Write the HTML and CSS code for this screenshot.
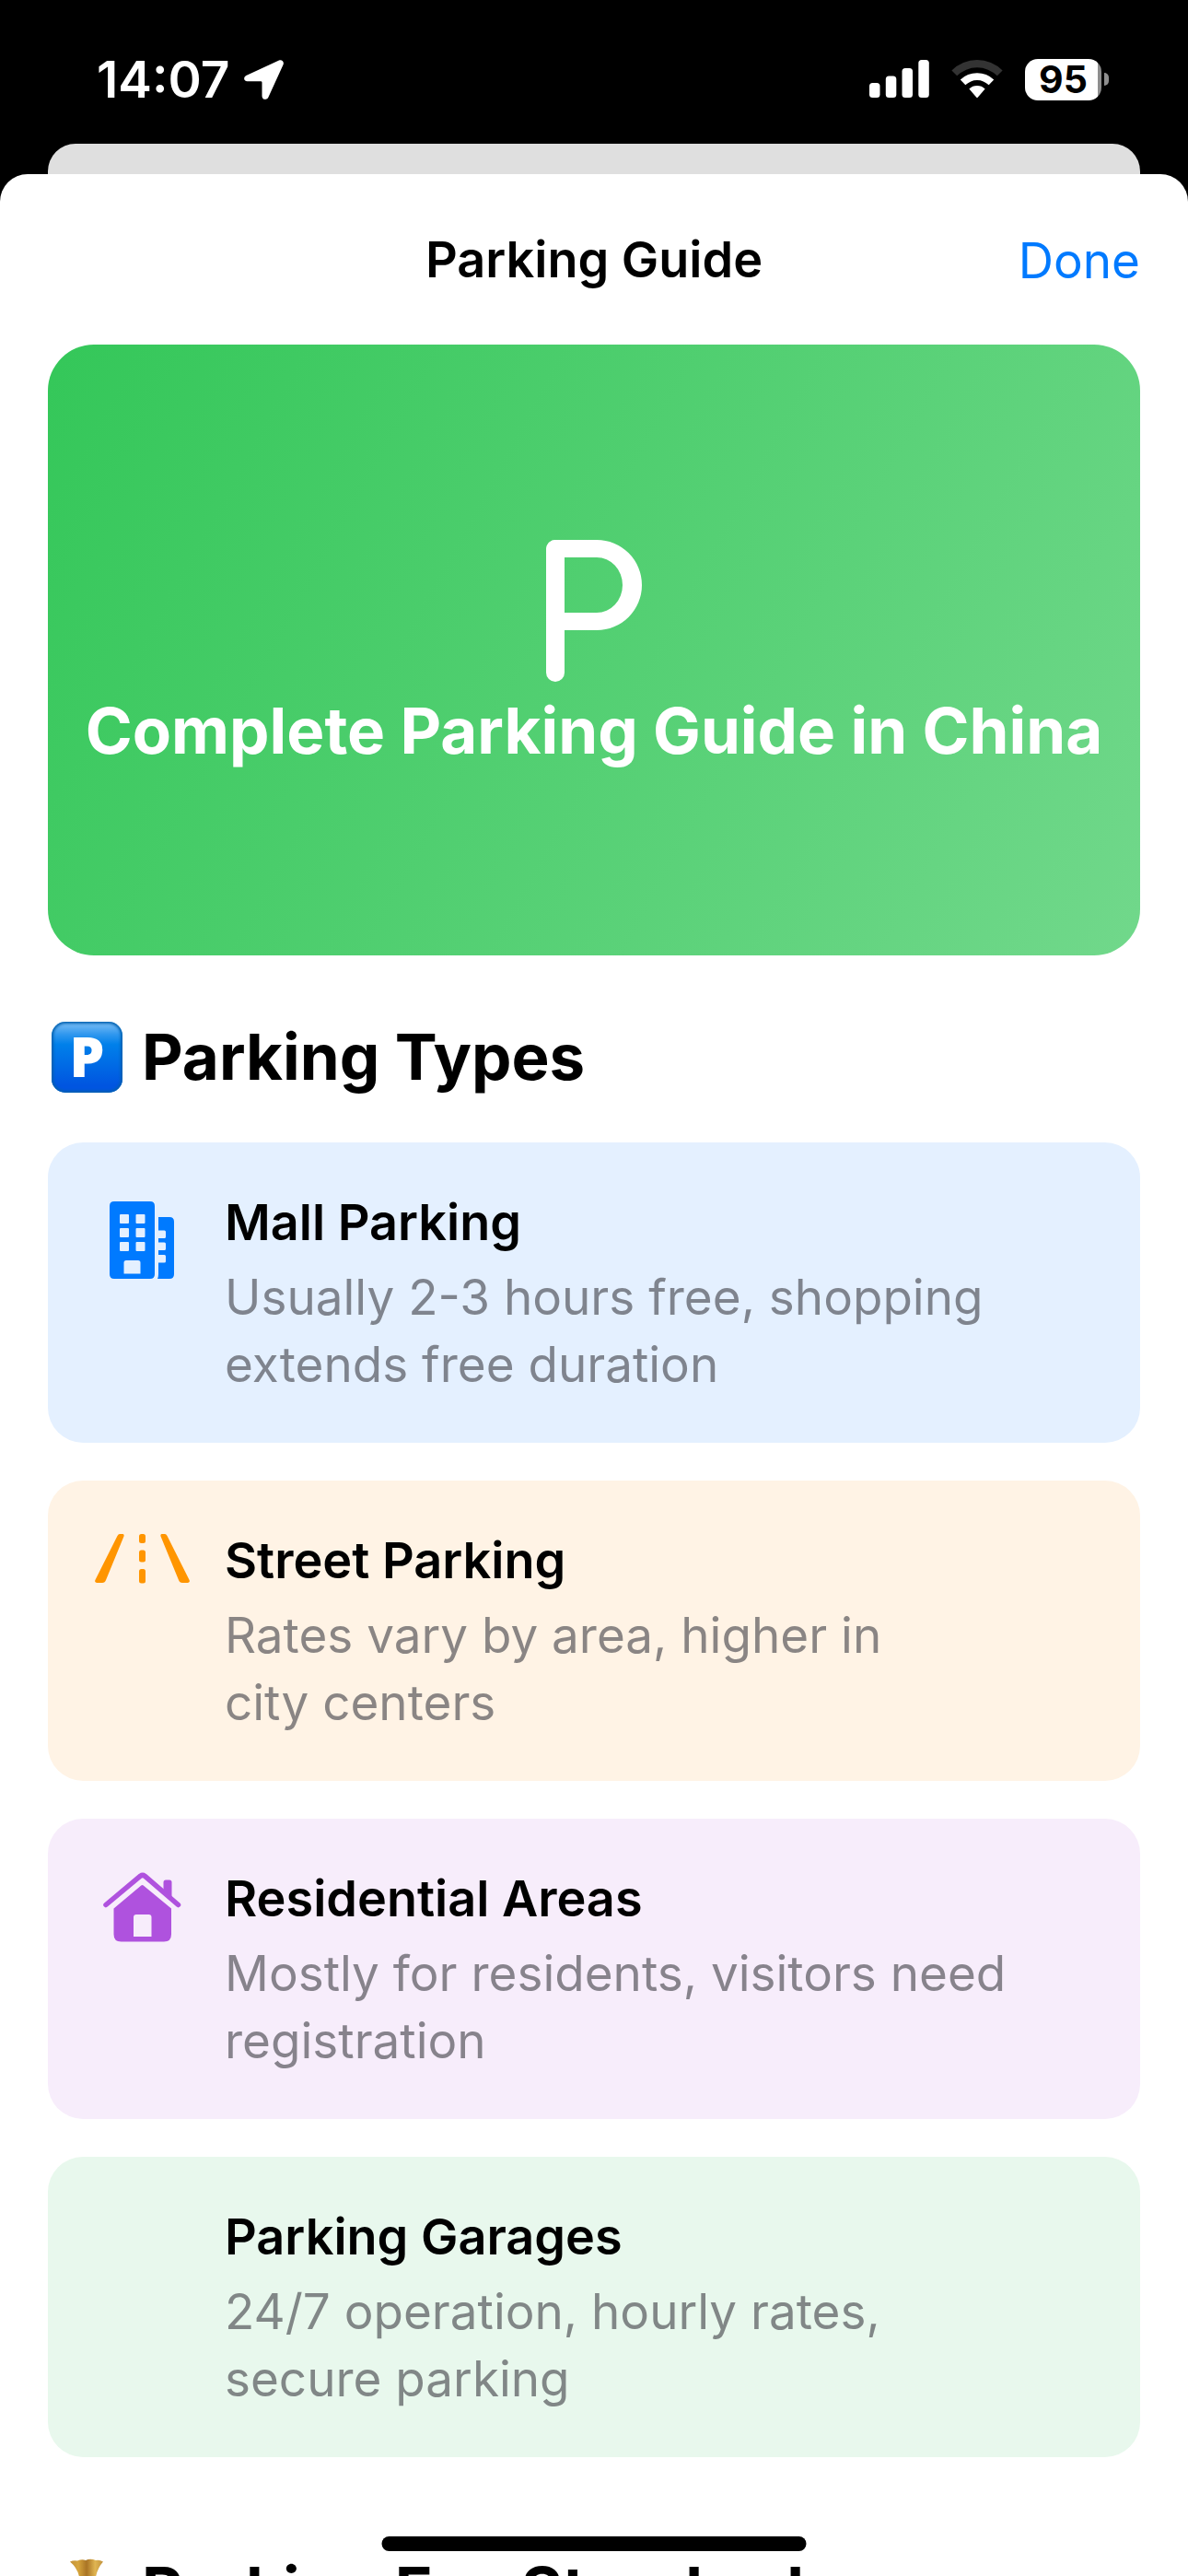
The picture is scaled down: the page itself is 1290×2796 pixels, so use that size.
FILE: index.html
```html
<!DOCTYPE html>
<html lang="en">
<head>
<meta charset="utf-8">
<meta name="viewport" content="width=device-width, initial-scale=1">
<title>Parking Guide</title>
<link rel="stylesheet" href="styles.css">
</head>
<body>
<div class="screen">
  <div class="status-bar">
    <div class="status-left">
      <span class="time">14:07</span>
      <svg class="location" width="43" height="43" viewBox="0 0 43 43" aria-hidden="true">
        <path d="M38 .6 2.3 17C-1 18.700-.4 23.300 3.500 23.300H18.200Q19.500 23.300 19.500 24.600V39.200C19.500 43.500 24.700 44 26.300 40.700L42.500 5.300C43.900 2.200 41-.8 38 .6Z" fill="#fff"/>
      </svg>
    </div>
    <div class="status-right">
      <svg width="65" height="42" viewBox="0 0 65 42" fill="#fff" aria-hidden="true">
        <rect x="0" y="25" width="11.500" height="16" rx="3.500"/>
        <rect x="17.800" y="17.500" width="11.500" height="23.500" rx="3.500"/>
        <rect x="35.500" y="9" width="11.500" height="32" rx="3.500"/>
        <rect x="53.300" y="0" width="11.500" height="41" rx="3.500"/>
      </svg>
      <svg width="56" height="42" viewBox="0 0 56 42" aria-hidden="true">
        <path d="M.4 11.500A39 39 0 0 1 55.600 11.500L49.800 17.300A31 31 0 0 0 6.200 17.300Z" fill="#333"/>
        <path d="M9.800 21.600A26 26 0 0 1 46.200 21.600L40.700 27.200A18.200 18.200 0 0 0 15.300 27.200Z" fill="#fff"/>
        <path d="M19.400 31.500A12.500 12.500 0 0 1 36.600 31.500L28.900 40.500Q28 41.500 27.100 40.500Z" fill="#fff"/>
      </svg>
      <div class="battery"><span class="battery-level">95</span><span class="battery-tip"></span></div>
    </div>
  </div>
  <div class="sheet-behind"></div>
  <main class="sheet">
    <header class="nav">
      <h1 class="nav-title">Parking Guide</h1>
      <button class="done" type="button">Done</button>
    </header>
    <div class="content">
      <section class="hero">
        <div class="hero-icon"><span class="parking-sign"></span></div>
        <h2 class="hero-title">Complete Parking Guide in China</h2>
      </section>

      <section class="section">
        <h2 class="section-title"><span class="emoji-parking" aria-hidden="true">P</span>Parking Types</h2>
        <ul class="cards">
          <li class="card blue">
            <div class="card-icon building">
              <svg width="70" height="84" viewBox="0 0 70 84" aria-hidden="true">
                <path fill="#007aff" fill-rule="evenodd" d="M5 0H44Q49 0 49 5V79Q49 84 44 84H5Q0 84 0 79V5Q0 0 5 0ZM12 14Q11 14 11 15V23Q11 24 12 24H20Q21 24 21 23V15Q21 14 20 14ZM29.500 14Q28.500 14 28.500 15V23Q28.500 24 29.500 24H37.500Q38.500 24 38.500 23V15Q38.500 14 37.500 14ZM12 29Q11 29 11 30V38Q11 39 12 39H20Q21 39 21 38V30Q21 29 20 29ZM29.500 29Q28.500 29 28.500 30V38Q28.500 39 29.500 39H37.500Q38.500 39 38.500 38V30Q38.500 29 37.500 29ZM12 44Q11 44 11 45V53Q11 54 12 54H20Q21 54 21 53V45Q21 44 20 44ZM29.500 44Q28.500 44 28.500 45V53Q28.500 54 29.500 54H37.500Q38.500 54 38.500 53V45Q38.500 44 37.500 44ZM18 64Q15.500 64 15.500 66.500V78.500H33.500V66.500Q33.500 64 31 64Z"/>
                <path fill="#007aff" d="M53 17H65Q70 17 70 22V79Q70 84 65 84H52Q53 82 53 79V66.500H59.500Q61 66.500 61 65V59.500Q61 58 59.500 58H53V53H59.500Q61 53 61 51.500V46Q61 44.500 59.500 44.500H53V40H59.500Q61 40 61 38.500V33Q61 31.500 59.500 31.500H53Z"/>
              </svg>
            </div>
            <div class="card-text">
              <h3 class="card-title">Mall Parking</h3>
              <p class="card-desc">Usually 2-3 hours free, shopping<br>extends free duration</p>
            </div>
          </li>
          <li class="card orange">
            <div class="card-icon road">
              <svg width="103" height="54" viewBox="0 0 103 54" fill="#ff9500" aria-hidden="true">
                <path d="M27 0H30.500Q32 .3 31.500 2.500L12 50Q11 53 8 53H2Q-.7 52.500 .4 50L24.500 2Q25.500 0 27 0Z"/>
                <path d="M76 0H72.500Q71 .3 71.500 2.500L91 50Q92 53 95 53H101Q103.700 52.500 102.600 50L78.500 2Q77.500 0 76 0Z"/>
                <rect x="48" y="0" width="7" height="10" rx="2.500"/>
                <rect x="48" y="17.500" width="7" height="13" rx="2.500"/>
                <rect x="48" y="38" width="7" height="15.500" rx="2.500"/>
              </svg>
            </div>
            <div class="card-text">
              <h3 class="card-title">Street Parking</h3>
              <p class="card-desc">Rates vary by area, higher in<br>city centers</p>
            </div>
          </li>
          <li class="card purple">
            <div class="card-icon house">
              <svg width="86" height="76" viewBox="-1 0 86 76" aria-hidden="true">
                <path d="M3 35.500 40.500 4.200Q42.800 2.500 45.100 4.200L81.500 35.500" fill="none" stroke="#af52de" stroke-width="5.500" stroke-linecap="round" stroke-linejoin="round"/>
                <path fill="#af52de" d="M65.500 19V11Q65.500 8.500 68 8.500H72Q74.500 8.500 74.500 11V28Z"/>
                <path fill="#af52de" fill-rule="evenodd" d="M41.300 14.500Q42.500 13.500 43.700 14.500L74 39.500V67.500Q74 75.500 66 75.500H19.500Q11.500 75.500 11.500 67.500V39.500ZM36 46Q33 46 33 49V70H52.500V49Q52.500 46 49.500 46Z"/>
              </svg>
            </div>
            <div class="card-text">
              <h3 class="card-title">Residential Areas</h3>
              <p class="card-desc">Mostly for residents, visitors need<br>registration</p>
            </div>
          </li>
          <li class="card green">
            <div class="card-icon"></div>
            <div class="card-text">
              <h3 class="card-title">Parking Garages</h3>
              <p class="card-desc">24/7 operation, hourly rates,<br>secure parking</p>
            </div>
          </li>
        </ul>
      </section>

      <section class="section next">
        <h2 class="section-title">
          <svg class="emoji-bag" width="77" height="77" viewBox="0 0 77 77" aria-hidden="true">
            <defs>
              <linearGradient id="bag" x1="0" x2="1"><stop offset="0" stop-color="#a8762f"/><stop offset=".35" stop-color="#d6a53d"/><stop offset=".5" stop-color="#a97425"/><stop offset=".65" stop-color="#e0b552"/><stop offset="1" stop-color="#94601f"/></linearGradient>
            </defs>
            <path fill="url(#bag)" d="M20 7.500Q24 5.500 28 6.500Q33 4.500 37 6Q42 3.500 48 6Q52 5 56 7.500Q50 14 48 24Q72 44 68 62Q65 75 38 75Q11 75 8 62Q5 44 30 24Q28 14 20 7.500Z"/>
          </svg>Parking Fee Standards</h2>
      </section>
    </div>
  </main>
  <div class="home-indicator"></div>
</div>
</body>
</html>
```

FILE: styles.css
```css
*,
*::before,
*::after {
  box-sizing: border-box;
}

body,
h1,
h2,
h3,
p,
ul {
  margin: 0;
  padding: 0;
}

body {
  background: #000;
  color: #000;
  font-family: Inter, "Liberation Sans", sans-serif;
}

.screen {
  position: relative;
  display: flex;
  flex-direction: column;
  height: 100vh;
  overflow: hidden;
}

/* Status bar */
.status-bar {
  flex: none;
  display: flex;
  align-items: center;
  justify-content: space-between;
  height: 156px;
  padding: 16px 86px 0 105px;
  color: #fff;
}

.status-left {
  display: flex;
  align-items: center;
  gap: 16px;
}

.time {
  font-size: 55px;
  line-height: 66px;
  font-weight: 600;
}

.status-right {
  display: flex;
  align-items: center;
  gap: 24px;
}

.battery {
  display: flex;
  align-items: center;
  gap: 3px;
}

.battery-level {
  width: 83px;
  height: 45px;
  border-radius: 14px;
  background: linear-gradient(to right, #fff 79px, #8e8e8e 79px);
  color: #000;
  font-size: 41px;
  line-height: 45px;
  font-weight: 700;
  text-align: center;
}

.battery-tip {
  width: 5px;
  height: 14px;
  border-radius: 0 7px 7px 0;
  background: #8e8e8e;
}

/* Sheets */
.sheet-behind {
  flex: none;
  height: 33px;
  margin: 0 52px;
  border-radius: 30px 30px 0 0;
  background: #dfdfdf;
}

.sheet {
  flex: 1;
  min-height: 0;
  overflow: hidden;
  border-radius: 30px 30px 0 0;
  background: #fff;
}

.nav {
  display: grid;
  grid-template-columns: 1fr auto 1fr;
  align-items: center;
  height: 185px;
  padding: 0 52px;
}

.nav-title {
  grid-column: 2;
  font-size: 54px;
  line-height: 66px;
  font-weight: 600;
}

.done {
  justify-self: end;
  padding: 2px 0 0;
  border: 0;
  background: none;
  color: #007aff;
  font: inherit;
  font-size: 53px;
  line-height: 66px;
}

.content {
  padding: 0 52px;
}

/* Hero banner */
.hero {
  display: flex;
  flex-direction: column;
  align-items: center;
  justify-content: center;
  height: 663px;
  border-radius: 50px;
  background: linear-gradient(119deg, #34c759, #71d88b);
  color: #fff;
}

.hero-icon {
  display: flex;
  align-items: center;
  height: 175px;
}

.parking-sign {
  position: relative;
  width: 104px;
  height: 154px;
}

.parking-sign::before,
.parking-sign::after {
  content: "";
  position: absolute;
  top: 0;
  left: 0;
}

.parking-sign::before {
  width: 20px;
  height: 154px;
  border-radius: 10px;
  background: #fff;
}

.parking-sign::after {
  width: 104px;
  height: 98px;
  border: 19px solid #fff;
  border-right-width: 21px;
  border-left-width: 20px;
  border-radius: 10px 49px 49px 0;
}

.hero-title {
  font-size: 69px;
  line-height: 86px;
  font-weight: 700;
  white-space: nowrap;
}

/* Sections */
.section {
  padding-top: 68px;
}

.section.next {
  padding-top: 102px;
}

.section-title {
  display: flex;
  align-items: center;
  gap: 21px;
  padding-left: 4px;
  font-size: 69px;
  line-height: 84px;
  font-weight: 700;
  white-space: nowrap;
}

.emoji-parking {
  width: 77px;
  height: 77px;
  border-radius: 15px;
  background: linear-gradient(#7fc0f5, #2f97ee 18%, #0080ea 32%, #0055e0 90%);
  box-shadow: inset 0 0 3px 2px #0060b0;
  color: #fff;
  font-family: "Open Sans", sans-serif;
  font-size: 60px;
  line-height: 75px;
  font-weight: 800;
  text-align: center;
}

.emoji-bag {
  flex: none;
}

.cards {
  display: flex;
  flex-direction: column;
  gap: 41px;
  margin-top: 51px;
  list-style: none;
}

.card {
  display: flex;
  gap: 36px;
  padding: 54px 48px 48px;
  border-radius: 38px;
}

.blue {
  background: #e4f0ff;
}

.orange {
  background: #fff3e5;
}

.purple {
  background: #f7edfb;
}

.green {
  background: #e8f8ed;
}

.card-icon {
  flex: none;
  display: flex;
  justify-content: center;
  align-items: flex-start;
  width: 108px;
}

.building {
  padding-top: 10px;
}

.road,
.house {
  padding-top: 4px;
}

.card-text {
  display: flex;
  flex-direction: column;
  gap: 12px;
  white-space: nowrap;
}

.card-title {
  font-size: 54px;
  line-height: 66px;
  font-weight: 600;
}

.card-desc {
  color: rgba(60, 60, 67, 0.6);
  font-size: 53px;
  line-height: 73px;
}

.home-indicator {
  position: absolute;
  bottom: 27px;
  left: 50%;
  width: 461px;
  height: 16px;
  border-radius: 8px;
  background: #000;
  transform: translateX(-50%);
}
```
